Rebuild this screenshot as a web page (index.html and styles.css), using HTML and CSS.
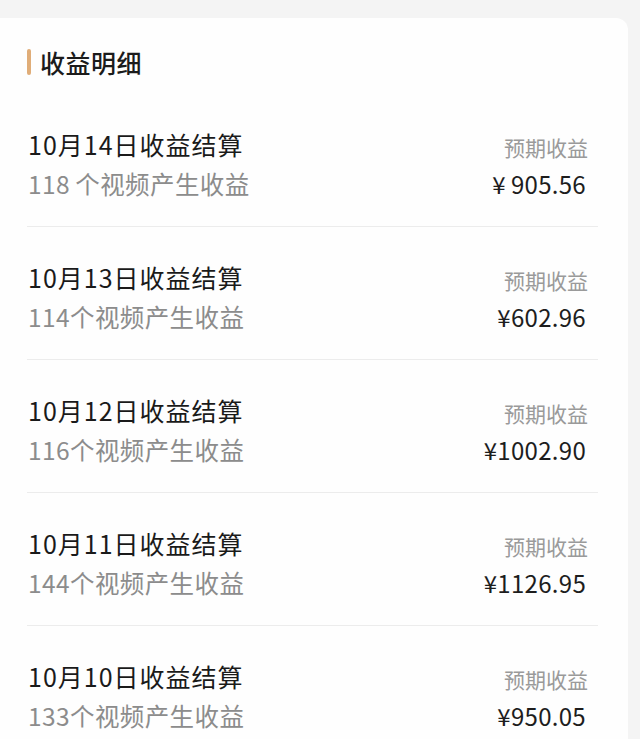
FILE: index.html
```html
<!DOCTYPE html>
<html lang="zh-CN">
<head>
    <meta charset="UTF-8">
    <meta name="viewport" content="width=device-width, initial-scale=1.0">
    <title>收益明细</title>
    <link rel="stylesheet" href="styles.css">
</head>
<body>
    <div class="card">
        <h2 class="card-title">收益明细</h2>
        <div class="list">
            <div class="row">
                <div class="date">10月14日收益结算</div>
                <div class="label">预期收益</div>
                <div class="count">118&#8201;个视频产生收益</div>
                <div class="amount">¥&#8201;905.56</div>
            </div>
            <div class="row">
                <div class="date">10月13日收益结算</div>
                <div class="label">预期收益</div>
                <div class="count">114个视频产生收益</div>
                <div class="amount">¥602.96</div>
            </div>
            <div class="row">
                <div class="date">10月12日收益结算</div>
                <div class="label">预期收益</div>
                <div class="count">116个视频产生收益</div>
                <div class="amount">¥1002.90</div>
            </div>
            <div class="row">
                <div class="date">10月11日收益结算</div>
                <div class="label">预期收益</div>
                <div class="count">144个视频产生收益</div>
                <div class="amount">¥1126.95</div>
            </div>
            <div class="row">
                <div class="date">10月10日收益结算</div>
                <div class="label">预期收益</div>
                <div class="count">133个视频产生收益</div>
                <div class="amount">¥950.05</div>
            </div>
        </div>
    </div>
</body>
</html>
```

FILE: styles.css
```css
body {
    margin: 0;
    padding: 18px 12px 0 0;
    background-color: #f4f4f4;
    font-family: "Noto Sans CJK SC", "Noto Sans", sans-serif;
    height: 739px;
    box-sizing: border-box;
    overflow: hidden;
}
.card {
    background-color: #fefefe;
    border-radius: 0 12px 0 0;
    padding: 28px 30px 0 27px;
    min-height: 100%;
}
.card-title {
    display: flex;
    align-items: center;
    margin: 0 0 16px 0;
    font-size: 25px;
    font-weight: 500;
    line-height: 32px;
    letter-spacing: 0.5px;
    color: #1b1b1b;
}
.card-title::before {
    content: "";
    width: 4px;
    height: 26px;
    border-radius: 2px;
    background-color: #e0ad78;
    margin-right: 9px;
}
.row {
    display: grid;
    grid-template-columns: 1fr auto;
    row-gap: 4px;
    padding: 32px 10px 24px 1px;
    border-bottom: 1px solid #ececec;
}
.date {
    font-size: 25px;
    line-height: 36px;
    letter-spacing: 1px;
    color: #1a1a1a;
}
.count {
    font-size: 24.5px;
    line-height: 36px;
    letter-spacing: 0.4px;
    color: #8c8c8c;
}
.label {
    justify-self: end;
    align-self: end;
    font-size: 21px;
    line-height: 30px;
    color: #9a9a9a;
}
.amount {
    justify-self: end;
    font-size: 24px;
    line-height: 36px;
    letter-spacing: 0.3px;
    color: #1d1d1d;
    padding-right: 2px;
}
```
